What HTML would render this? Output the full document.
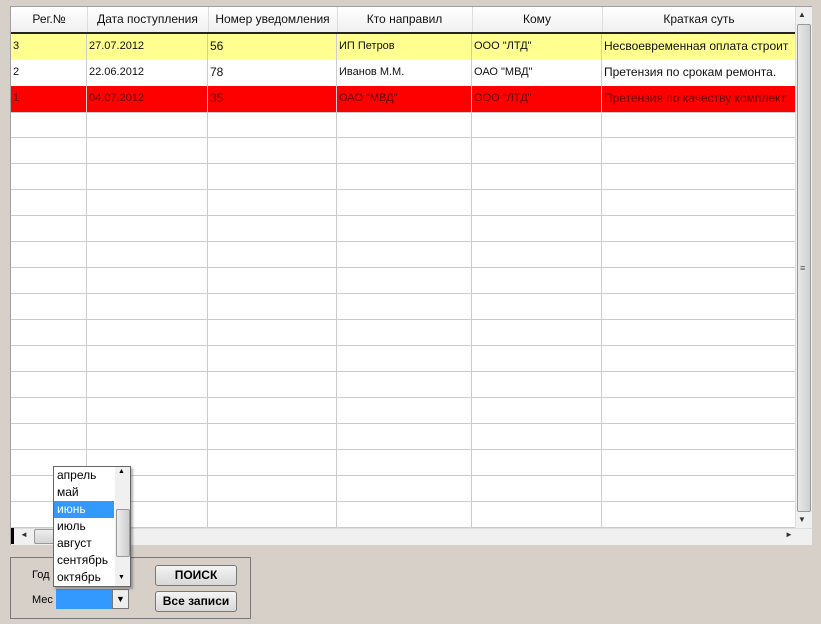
<!DOCTYPE html>
<html><head><meta charset="utf-8"><style>
body{margin:0;width:821px;height:624px;background:#d6d0c8;position:relative;overflow:hidden;font-family:"Liberation Sans",sans-serif;}
.a{position:absolute;box-sizing:border-box;}
.grid{left:10px;top:6px;width:802px;height:539px;background:#fff;border:1px solid #a0a0a0;}
.hd{left:0;top:0;width:785px;height:27px;background:linear-gradient(#fff,#f0f0f0);border-bottom:2px solid #222;}
.hc{position:absolute;top:0;height:25px;line-height:25px;text-align:center;font-size:12px;color:#111;border-right:1px solid #ddd;}
.row{position:absolute;left:0;width:785px;height:26px;border-bottom:1px solid #ccc;}
.c{position:absolute;top:0;height:25px;line-height:25px;font-size:11px;padding-left:2px;border-right:1px solid #ccc;box-sizing:border-box;white-space:nowrap;overflow:hidden;color:#111;}
.vl{position:absolute;top:27px;width:1px;height:494px;background:#ccc;z-index:2;}
</style></head><body>
<div class="a grid">
 <div class="a hd">
  <div class="hc" style="left:0;width:76px">Рег.№</div>
  <div class="hc" style="left:76px;width:121px">Дата поступления</div>
  <div class="hc" style="left:197px;width:129px">Номер уведомления</div>
  <div class="hc" style="left:326px;width:135px">Кто направил</div>
  <div class="hc" style="left:461px;width:130px">Кому</div>
  <div class="hc" style="left:591px;width:194px">Краткая суть</div>
 </div>
 <div class="a" style="left:0;top:105px;width:785px;height:416px;background:repeating-linear-gradient(#fff 0 25px,#ccc 25px 26px)"></div>
 <div class="vl" style="left:75px"></div><div class="vl" style="left:196px"></div><div class="vl" style="left:325px"></div><div class="vl" style="left:460px"></div><div class="vl" style="left:590px"></div>
 <div class="row" style="top:27px;background:#ffff90">
  <div class="c" style="left:0;width:76px">3</div><div class="c" style="left:76px;width:121px">27.07.2012</div><div class="c" style="left:197px;width:129px;font-size:12px">56</div><div class="c" style="left:326px;width:135px">ИП Петров</div><div class="c" style="left:461px;width:130px">ООО "ЛТД"</div><div class="c" style="left:591px;width:194px;font-size:12px">Несвоевременная оплата строит</div>
 </div>
 <div class="row" style="top:53px;background:#fff">
  <div class="c" style="left:0;width:76px">2</div><div class="c" style="left:76px;width:121px">22.06.2012</div><div class="c" style="left:197px;width:129px;font-size:12px">78</div><div class="c" style="left:326px;width:135px">Иванов М.М.</div><div class="c" style="left:461px;width:130px">ОАО "МВД"</div><div class="c" style="left:591px;width:194px;font-size:12px">Претензия по срокам ремонта.</div>
 </div>
 <div class="row" style="top:79px;background:#ff0000">
  <div class="c" style="left:0;width:76px;color:#600">1</div><div class="c" style="left:76px;width:121px;color:#600">04.07.2012</div><div class="c" style="left:197px;width:129px;font-size:12px;color:#600">35</div><div class="c" style="left:326px;width:135px;color:#600">ОАО "МВД"</div><div class="c" style="left:461px;width:130px;color:#600">ООО "ЛТД"</div><div class="c" style="left:591px;width:194px;font-size:12px;color:#600">Претензия по качеству комплект</div>
 </div>
 <!-- vscroll -->
 <div class="a" style="left:784px;top:0;width:17px;height:521px;background:#f0f0f0;border-left:1px solid #ddd;z-index:3"></div>
 <div class="a" style="left:787px;top:3px;font-size:8px;color:#333;z-index:4">▲</div>
 <div class="a" style="left:786px;top:17px;width:14px;height:488px;background:linear-gradient(90deg,#e8e8e8,#d0d0d0);border:1px solid #999;border-radius:2px;z-index:4"></div>
 <div class="a" style="left:789px;top:256px;font-size:9px;color:#555;z-index:5">≡</div>
 <div class="a" style="left:787px;top:508px;font-size:8px;color:#333;z-index:4">▼</div>
 <!-- hscroll -->
 <div class="a" style="left:0;top:521px;width:801px;height:17px;background:#f0f0f0;border-top:1px solid #ddd;z-index:3"></div>
 <div class="a" style="left:0;top:521px;width:3px;height:16px;background:#000;z-index:4"></div>
 <div class="a" style="left:9px;top:523px;font-size:8px;color:#333;z-index:4">◄</div>
 <div class="a" style="left:23px;top:522px;width:80px;height:15px;background:linear-gradient(#eee,#d4d4d4);border:1px solid #999;border-radius:2px;z-index:4"></div>
 <div class="a" style="left:774px;top:523px;font-size:8px;color:#333;z-index:4">►</div>
</div>
<div class="a" style="left:10px;top:557px;width:241px;height:62px;border:1px solid #777"></div>
<div class="a" style="left:32px;top:569px;font-size:11px">Год</div>
<div class="a" style="left:32px;top:594px;font-size:11px">Мес</div>
<div class="a" style="left:56px;top:589px;width:56px;height:20px;background:#3399ff"></div>
<div class="a" style="left:112px;top:589px;width:17px;height:20px;background:#eee;border:1px solid #777;font-size:9px;text-align:center;line-height:18px">▼</div>
<div class="a" style="left:155px;top:565px;width:82px;height:21px;background:linear-gradient(#f4f4f4,#d8d8d8);border:1px solid #777;border-radius:3px;font-size:12px;font-weight:bold;text-align:center;line-height:19px">ПОИСК</div>
<div class="a" style="left:155px;top:591px;width:82px;height:21px;background:linear-gradient(#f4f4f4,#d8d8d8);border:1px solid #777;border-radius:3px;font-size:12px;font-weight:bold;text-align:center;line-height:19px">Все записи</div>
<div class="a" style="left:53px;top:466px;width:78px;height:121px;background:#fff;border:1px solid #666;box-shadow:2px 2px 2px rgba(0,0,0,.3);font-size:12px;z-index:10">
 <div style="position:absolute;left:0;top:0;width:60px">
  <div style="height:17px;line-height:17px;padding-left:3px">апрель</div>
  <div style="height:17px;line-height:17px;padding-left:3px">май</div>
  <div style="height:17px;line-height:17px;padding-left:3px;background:#3399ff;color:#fff">июнь</div>
  <div style="height:17px;line-height:17px;padding-left:3px">июль</div>
  <div style="height:17px;line-height:17px;padding-left:3px">август</div>
  <div style="height:17px;line-height:17px;padding-left:3px">сентябрь</div>
  <div style="height:17px;line-height:17px;padding-left:3px">октябрь</div>
 </div>
 <div style="position:absolute;left:61px;top:0;width:15px;height:119px;background:#f0f0f0"></div>
 <div style="position:absolute;left:64px;top:1px;font-size:7px">▲</div>
 <div style="position:absolute;left:62px;top:42px;width:12px;height:46px;background:linear-gradient(90deg,#eee,#ccc);border:1px solid #999;border-radius:2px"></div>
 <div style="position:absolute;left:64px;top:107px;font-size:7px">▼</div>
</div>
</body></html>
